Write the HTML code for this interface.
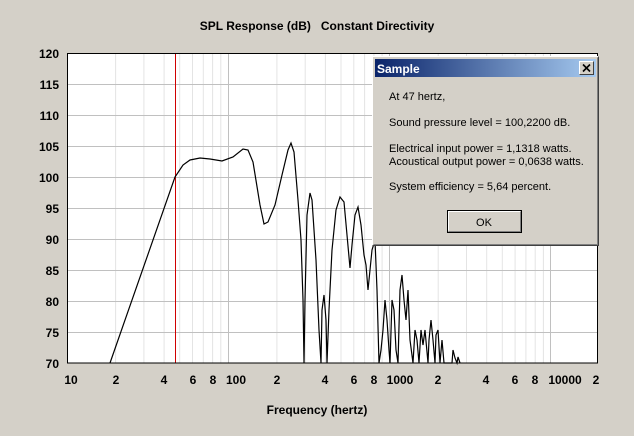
<!DOCTYPE html>
<html><head><meta charset="utf-8"><style>
html,body{margin:0;padding:0;background:#d4d0c8;}
svg{display:block}
text{font-family:"Liberation Sans",sans-serif;}
</style></head><body>
<svg width="634" height="436" viewBox="0 0 634 436" xmlns="http://www.w3.org/2000/svg">
<rect width="634" height="436" fill="#d4d0c8"/>
<text x="317" y="30" font-size="12" font-weight="bold" text-anchor="middle" fill="#000" xml:space="preserve">SPL Response (dB)   Constant Directivity</text>
<rect x="67" y="53" width="531" height="310" fill="#fff"/>
<g stroke="#e4e4e4" stroke-width="1">
<line x1="115.6" y1="53" x2="115.6" y2="363"/><line x1="143.9" y1="53" x2="143.9" y2="363"/><line x1="164.1" y1="53" x2="164.1" y2="363"/><line x1="179.7" y1="53" x2="179.7" y2="363"/><line x1="192.5" y1="53" x2="192.5" y2="363"/><line x1="203.3" y1="53" x2="203.3" y2="363"/><line x1="212.6" y1="53" x2="212.6" y2="363"/><line x1="220.8" y1="53" x2="220.8" y2="363"/>
<line x1="276.9" y1="53" x2="276.9" y2="363"/><line x1="305.2" y1="53" x2="305.2" y2="363"/><line x1="325.4" y1="53" x2="325.4" y2="363"/><line x1="341" y1="53" x2="341" y2="363"/><line x1="353.8" y1="53" x2="353.8" y2="363"/><line x1="364.6" y1="53" x2="364.6" y2="363"/><line x1="373.9" y1="53" x2="373.9" y2="363"/><line x1="382.1" y1="53" x2="382.1" y2="363"/>
<line x1="438.2" y1="53" x2="438.2" y2="363"/><line x1="466.5" y1="53" x2="466.5" y2="363"/><line x1="486.7" y1="53" x2="486.7" y2="363"/><line x1="502.3" y1="53" x2="502.3" y2="363"/><line x1="515.1" y1="53" x2="515.1" y2="363"/><line x1="525.9" y1="53" x2="525.9" y2="363"/><line x1="535.2" y1="53" x2="535.2" y2="363"/><line x1="543.4" y1="53" x2="543.4" y2="363"/>
</g>
<g stroke="#c0c0c0" stroke-width="1">
<line x1="228.5" y1="53" x2="228.5" y2="363"/><line x1="389.5" y1="53" x2="389.5" y2="363"/><line x1="550.5" y1="53" x2="550.5" y2="363"/>
<line x1="67" y1="84.5" x2="598" y2="84.5"/><line x1="67" y1="115.5" x2="598" y2="115.5"/><line x1="67" y1="146.5" x2="598" y2="146.5"/><line x1="67" y1="177.5" x2="598" y2="177.5"/><line x1="67" y1="208.5" x2="598" y2="208.5"/><line x1="67" y1="239.5" x2="598" y2="239.5"/><line x1="67" y1="270.5" x2="598" y2="270.5"/><line x1="67" y1="301.5" x2="598" y2="301.5"/><line x1="67" y1="332.5" x2="598" y2="332.5"/>
</g>
<line x1="175.5" y1="53" x2="175.5" y2="363" stroke="#d00000" stroke-width="1"/>
<polyline fill="none" stroke="#000" stroke-width="1.2" points="110,363 175,177 183,165 190,160 200,158 210,159 222,161 233,157 243,149 248,150 253,162 260,205 264,224 268,222 275,205 282,175 288,150 291,143 294,152 298,200 301,240 303,300 304,363 305,300 307,215 310,193 312,200 316,260 319,330 321,363 322,310 324,295 326,320 327,363 329,310 332,250 336,210 340,197 344,202 347,235 350,268 352,245 355,215 358,207 361,225 364,255 366,265 368,290 372,250 375,240 377,290 379,363 381,350 383,330 385,300 387,320 389,350 390,363 392,300 394,310 396,350 398,363 400,290 402,275 404,300 406,320 408,290 410,340 413,363 415,330 417,340 419,363 421,330 423,345 425,330 428,363 429,340 431,320 433,340 435,363 436,335 438,330 440,363 442,340 444,363 452,363 453,350 455,358 457,363 458,357 460,363"/>
<rect x="67.5" y="53.5" width="530" height="309.5" fill="none" stroke="#000" stroke-width="1"/>
<g font-size="12" font-weight="bold" text-anchor="end" fill="#000">
<text x="59" y="58">120</text><text x="59" y="89">115</text><text x="59" y="120">110</text><text x="59" y="151">105</text><text x="59" y="182">100</text><text x="59" y="213">95</text><text x="59" y="244">90</text><text x="59" y="275">85</text><text x="59" y="306">80</text><text x="59" y="337">75</text><text x="59" y="368">70</text>
</g>
<g font-size="12" font-weight="bold" text-anchor="middle" fill="#000">
<text x="71" y="384">10</text><text x="116" y="384">2</text><text x="164" y="384">4</text><text x="193" y="384">6</text><text x="213" y="384">8</text><text x="236" y="384">100</text><text x="277" y="384">2</text><text x="325" y="384">4</text><text x="354" y="384">6</text><text x="374" y="384">8</text><text x="400" y="384">1000</text><text x="438" y="384">2</text><text x="486" y="384">4</text><text x="515" y="384">6</text><text x="535" y="384">8</text><text x="565" y="384">10000</text><text x="596" y="384">2</text>
<text x="317" y="414">Frequency (hertz)</text>
</g>
<rect x="372" y="56" width="227" height="190" fill="#d4d0c8"/>
<path d="M372.5 245.5V56.5H598.5" stroke="#fff" fill="none"/>
<path d="M372.5 245.5H598.5V56.5" stroke="#404040" fill="none"/>
<path d="M373.5 244.5H597.5V57.5" stroke="#808080" fill="none"/>
<defs><linearGradient id="tb" x1="0" x2="1"><stop offset="0" stop-color="#0a246a"/><stop offset="1" stop-color="#a6caf0"/></linearGradient></defs>
<rect x="375" y="59" width="221" height="18" fill="url(#tb)"/>
<text x="377" y="73" font-size="12" font-weight="bold" fill="#fff">Sample</text>
<rect x="579" y="61" width="15" height="14" fill="#d4d0c8"/>
<path d="M579.5 74.5V61.5H593.5" stroke="#fff" fill="none"/>
<path d="M579.5 74.5H593.5V61.5" stroke="#404040" fill="none"/>
<path d="M583 64.5L590 71.5M590 64.5L583 71.5" stroke="#000" stroke-width="1.6"/>
<g font-size="11" fill="#000">
<text x="389" y="100">At 47 hertz,</text>
<text x="389" y="126">Sound pressure level = 100,2200 dB.</text>
<text x="389" y="152">Electrical input power = 1,1318 watts.</text>
<text x="389" y="165">Acoustical output power = 0,0638 watts.</text>
<text x="389" y="190">System efficiency = 5,64 percent.</text>
</g>
<rect x="447.5" y="210.5" width="74" height="22" fill="#d4d0c8" stroke="#000"/>
<path d="M448.5 230.5V211.5H520.5" stroke="#fff" fill="none"/>
<path d="M448.5 231.5H520.5V211.5" stroke="#808080" fill="none"/>
<text x="484" y="226" font-size="11" text-anchor="middle" fill="#000">OK</text>
</svg>
</body></html>
